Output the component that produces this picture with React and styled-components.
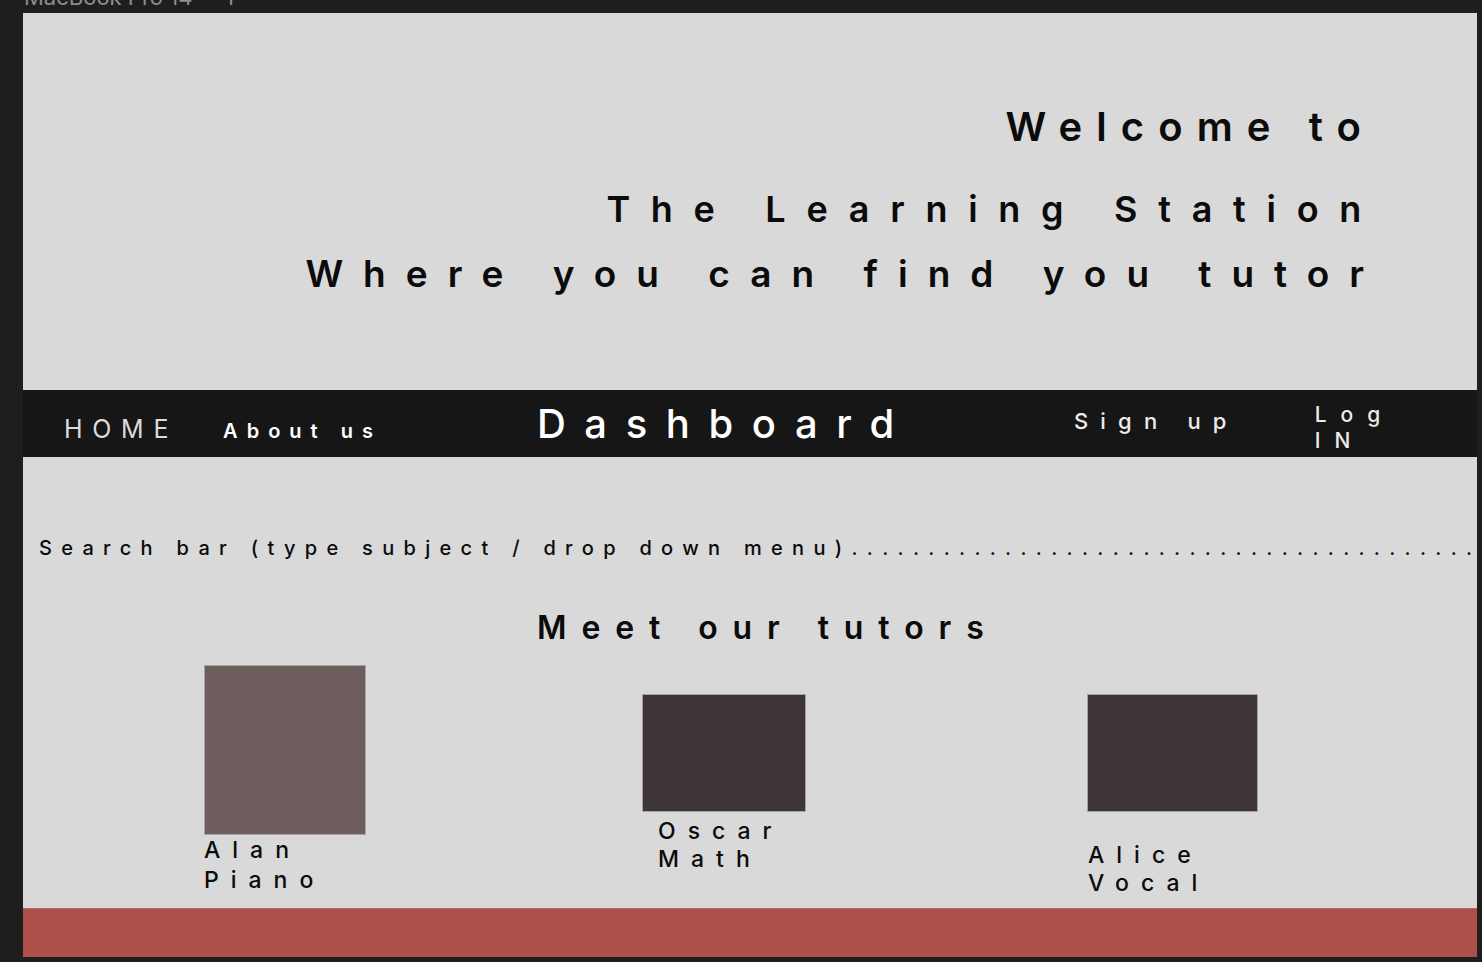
import React from "react";
import styled, { createGlobalStyle } from "styled-components";

const Global = createGlobalStyle`
  html, body { margin: 0; padding: 0; background: #1e1e1e; }
  body { font-family: Inter, "Noto Sans", sans-serif; }
  * { box-sizing: border-box; }
`;

const Canvas = styled.div`
  position: relative;
  width: 1482px;
  height: 962px;
  padding: 13px 5px 5px 23px;
  background: #1e1e1e;
  overflow: hidden;
`;

const FrameLabel = styled.div`
  position: absolute;
  top: -14px;
  left: 24px;
  font-size: 22px;
  line-height: 1;
  color: #8e8e8e;
  white-space: nowrap;
`;

const Frame = styled.div`
  width: 1454px;
  height: 944px;
  background: #d9d9d9;
  overflow: hidden;
  display: flex;
  flex-direction: column;
`;

const Hero = styled.header`
  height: 377px;
  flex: none;
  display: flex;
  flex-direction: column;
  align-items: flex-end;
  padding-top: 94px;
`;

const HeroLine = styled.h1`
  margin: ${(p) => p.$mt}px ${(p) => p.$mr}px 0 0;
  font-size: ${(p) => p.$size}px;
  line-height: 1;
  font-weight: 600;
  letter-spacing: ${(p) => p.$ls}px;
  color: #0b0b0b;
  white-space: nowrap;
`;

const Nav = styled.nav`
  height: 67px;
  flex: none;
  background: #161616;
  display: flex;
  align-items: flex-start;
`;

const NavItem = styled.a`
  display: block;
  margin-left: ${(p) => p.$ml}px;
  margin-top: ${(p) => p.$mt}px;
  font-size: ${(p) => p.$size}px;
  line-height: ${(p) => p.$lh || 1};
  font-weight: ${(p) => p.$weight};
  letter-spacing: ${(p) => p.$ls}px;
  color: ${(p) => p.$color || "#ffffff"};
  white-space: nowrap;
  text-decoration: none;
`;

const Main = styled.main`
  height: 451px;
  flex: none;
  display: flex;
  flex-direction: column;
`;

const SearchBar = styled.div`
  margin: 81px 0 0 16px;
  font-size: 20px;
  line-height: 1;
  font-weight: 500;
  letter-spacing: 9.3px;
  color: #0b0b0b;
  white-space: nowrap;
`;

const SectionTitle = styled.h2`
  margin: 54px 0 0 514px;
  font-size: 32px;
  line-height: 1;
  font-weight: 600;
  letter-spacing: 14.9px;
  color: #0b0b0b;
  white-space: nowrap;
`;

const Tutors = styled.div`
  display: grid;
  grid-template-columns: 438px 445px 1fr;
  padding-left: 181px;
  margin-top: 21px;
  align-items: start;
`;

const Card = styled.div`
  display: flex;
  flex-direction: column;
  padding-top: ${(p) => p.$top}px;
`;

const Photo = styled.div`
  width: ${(p) => p.$w}px;
  height: ${(p) => p.$h}px;
  background: ${(p) => p.$color};
  border: 1px solid #a9a4a4;
`;

const Caption = styled.div`
  margin: ${(p) => p.$mt}px 0 0 ${(p) => p.$indent}px;
  font-size: 23px;
  line-height: ${(p) => p.$lh}px;
  font-weight: 500;
  letter-spacing: 12px;
  color: #0b0b0b;
  white-space: nowrap;
`;

const Footer = styled.footer`
  height: 49px;
  flex: none;
  background: #ad504c;
  border-top: 1px solid #b86561;
`;

const tutors = [
  { name: "Alan", subject: "Piano", w: 162, h: 170, color: "#6f5e5e", top: 0, mt: 0, indent: 0, lh: 30 },
  { name: "Oscar", subject: "Math", w: 164, h: 118, color: "#3e3536", top: 29, mt: 5, indent: 16, lh: 28 },
  { name: "Alice", subject: "Vocal", w: 171, h: 118, color: "#3e3536", top: 29, mt: 29, indent: 1, lh: 28 },
];

export default function App() {
  return (
    <>
      <Global />
      <Canvas>
        <FrameLabel>MacBook Pro 14" - 1</FrameLabel>
        <Frame>
          <Hero>
            <HeroLine $size={40} $ls={14.1} $mt={0} $mr={102}>Welcome to</HeroLine>
            <HeroLine $size={36} $ls={20.7} $mt={44} $mr={95}>The Learning Station</HeroLine>
            <HeroLine $size={37} $ls={20.0} $mt={28} $mr={93}>Where you can find you tutor</HeroLine>
          </Hero>
          <Nav>
            <NavItem $ml={41} $mt={27} $size={25} $weight={400} $ls={9.7} $color="#dcdcdc">HOME</NavItem>
            <NavItem $ml={45} $mt={31} $size={20} $weight={600} $ls={9.0}>About us</NavItem>
            <NavItem $ml={155} $mt={14} $size={40} $weight={500} $ls={18.6}>Dashboard</NavItem>
            <NavItem $ml={161} $mt={20} $size={22} $weight={500} $ls={12.2} $color="#ececec">Sign up</NavItem>
            <NavItem $ml={76} $mt={12} $size={21} $lh={1.24} $weight={500} $ls={14} $color="#ececec">
              Log
              <br />
              IN
            </NavItem>
          </Nav>
          <Main>
            <SearchBar>
              Search bar (type subject / drop down menu){".".repeat(60)}
            </SearchBar>
            <SectionTitle>Meet our tutors</SectionTitle>
            <Tutors>
              {tutors.map((t) => (
                <Card key={t.name} $top={t.top}>
                  <Photo $w={t.w} $h={t.h} $color={t.color} />
                  <Caption $mt={t.mt} $indent={t.indent} $lh={t.lh}>
                    {t.name}
                    <br />
                    {t.subject}
                  </Caption>
                </Card>
              ))}
            </Tutors>
          </Main>
          <Footer />
        </Frame>
      </Canvas>
    </>
  );
}
